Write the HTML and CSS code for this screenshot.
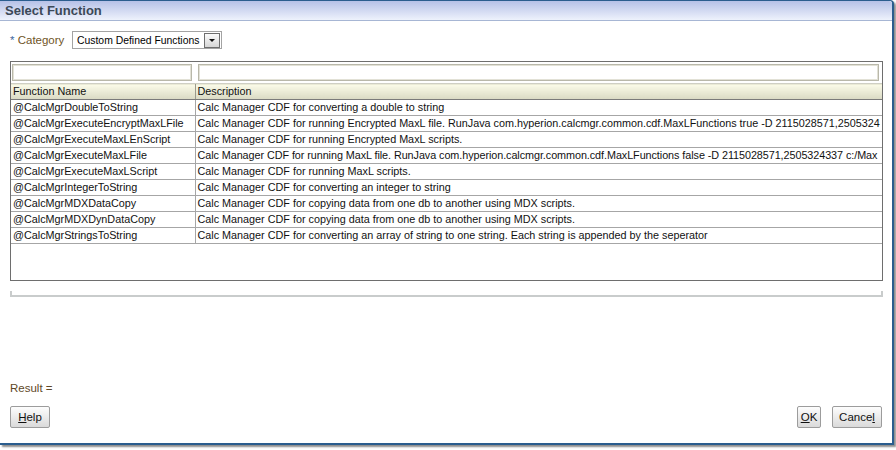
FILE: index.html
```html
<!DOCTYPE html>
<html>
<head>
<meta charset="utf-8">
<link rel="stylesheet" href="styles.css">
</head>
<body>
<div class="dialog">
  <div class="titlebar">Select Function</div>
  <div class="content">
    <div class="category">
      <span class="label"><span class="req">*</span> Category</span>
      <div class="select">
        <span class="select-text">Custom Defined Functions</span>
        <span class="select-btn"><span class="arrow"></span></span>
      </div>
    </div>
    <div class="grid">
      <table>
        <colgroup><col class="c1"><col class="c2"></colgroup>
        <tr class="filter">
          <td><div class="finput"></div></td>
          <td><div class="finput"></div></td>
        </tr>
        <tr class="head">
          <th>Function Name</th>
          <th>Description</th>
        </tr>
        <tr><td>@CalcMgrDoubleToString</td><td>Calc Manager CDF for converting a double to string</td></tr>
        <tr><td>@CalcMgrExecuteEncryptMaxLFile</td><td>Calc Manager CDF for running Encrypted MaxL file. RunJava com.hyperion.calcmgr.common.cdf.MaxLFunctions true -D 2115028571,2505324</td></tr>
        <tr><td>@CalcMgrExecuteMaxLEnScript</td><td>Calc Manager CDF for running Encrypted MaxL scripts.</td></tr>
        <tr><td>@CalcMgrExecuteMaxLFile</td><td class="tight">Calc Manager CDF for running MaxL file. RunJava com.hyperion.calcmgr.common.cdf.MaxLFunctions false -D 2115028571,2505324337 c:/Max</td></tr>
        <tr><td>@CalcMgrExecuteMaxLScript</td><td>Calc Manager CDF for running MaxL scripts.</td></tr>
        <tr><td>@CalcMgrIntegerToString</td><td>Calc Manager CDF for converting an integer to string</td></tr>
        <tr><td>@CalcMgrMDXDataCopy</td><td>Calc Manager CDF for copying data from one db to another using MDX scripts.</td></tr>
        <tr><td>@CalcMgrMDXDynDataCopy</td><td>Calc Manager CDF for copying data from one db to another using MDX scripts.</td></tr>
        <tr><td>@CalcMgrStringsToString</td><td>Calc Manager CDF for converting an array of string to one string. Each string is appended by the seperator</td></tr>
      </table>
    </div>
    <div class="hscroll"></div>
    <div class="spacer"></div>
    <div class="result">Result =</div>
    <div class="buttons">
      <button class="btn help"><u>H</u>elp</button>
      <div class="right">
        <button class="btn ok"><u>O</u>K</button>
        <button class="btn cancel">Cance<u>l</u></button>
      </div>
    </div>
  </div>
</div>
</body>
</html>
```
FILE: styles.css
```css
html, body {
  margin: 0;
  padding: 0;
  background: #ffffff;
}
body {
  font-family: "Liberation Sans", Arial, sans-serif;
  font-size: 11px;
  color: #000;
  width: 896px;
  height: 450px;
  overflow: hidden;
}
.dialog {
  width: 892px;
  height: 442px;
  border-top: 1px solid #2b5d8e;
  border-right: 2px solid #2b5d8e;
  border-bottom: 2px solid #2b5d8e;
  border-top-right-radius: 4px;
  box-shadow: 2px 2px 2px #8c8c8c;
  display: flex;
  flex-direction: column;
  background: #fff;
}
.titlebar {
  height: 19px;
  line-height: 19px;
  border-bottom: 1px solid #a7b6d4;
  background: linear-gradient(#b6c1e7, #eef2fc);
  padding-left: 5px;
  font-weight: bold;
  font-size: 13px;
  color: #3b4857;
  border-top-right-radius: 3px;
}
.content {
  flex: 1;
  display: flex;
  flex-direction: column;
  padding: 10px 9px 15px 10px;
}
.category {
  display: flex;
  align-items: center;
  height: 18px;
}
.label {
  color: #6f5426;
  font-size: 11.5px;
  width: 62px;
}
.req {
  color: #3f6aa0;
}
.select {
  width: 143px;
  height: 16px;
  border: 1px solid #a3a3a3;
  display: flex;
  align-items: center;
  justify-content: space-between;
  padding-left: 4px;
  padding-right: 1px;
  box-sizing: content-box;
  white-space: nowrap;
}
.select-text {
  font-size: 10.4px;
  white-space: nowrap;
}
.select-btn {
  width: 14px;
  height: 13px;
  border: 1px solid #6e6e6e;
  background: linear-gradient(#fbfbfb, #d6d6d6);
  display: flex;
  align-items: center;
  justify-content: center;
  flex-shrink: 0;
}
.arrow {
  width: 0;
  height: 0;
  border-left: 3px solid transparent;
  border-right: 3px solid transparent;
  border-top: 3px solid #111;
}
.grid {
  margin-top: 12px;
  width: 871px;
  height: 218px;
  border: 1px solid #6e6e6e;
  overflow: hidden;
}
table {
  width: 871px;
  table-layout: fixed;
  border-collapse: collapse;
}
col.c1 { width: 184px; }
td, th {
  padding: 0 0 0 2px;
  white-space: nowrap;
  overflow: hidden;
  height: 15px;
  line-height: 15px;
  text-align: left;
  font-weight: normal;
  font-size: 10.8px;
  border-bottom: 1px solid #a6a6a6;
  border-right: 1px solid #a6a6a6;
  color: #111;
}
td.tight {
  letter-spacing: -0.06px;
}
td:last-child, th:last-child {
  border-right: none;
}
tr.filter td {
  height: 21px;
  padding: 0;
  border-right: none;
  border-bottom: 1px solid #cfcfc4;
}
.finput {
  height: 15px;
  margin: 1px 3px 2px 1px;
  border: 1px solid #b9b8aa;
  box-shadow: inset 0 0 0 1px #e2e1d6;
}
tr.filter td:last-child .finput {
  margin-left: 3px;
}
tr.head th {
  background: linear-gradient(#fbfbe9, #d9d9c3);
  border-bottom: 1px solid #7a7a7a;
  border-right: 1px solid #9a9a8c;
}
tr.head th:last-child {
  border-right: none;
}
.hscroll {
  margin-top: 10px;
  width: 869px;
  height: 4px;
  border: 2px solid #c9cccc;
  border-top: none;
}
.spacer {
  flex: 1;
}
.result {
  color: #5f4827;
  font-size: 11.5px;
  height: 14px;
  line-height: 14px;
  margin-bottom: 11px;
}
.buttons {
  display: flex;
  justify-content: space-between;
  align-items: center;
  height: 22px;
}
.right {
  display: flex;
  gap: 11px;
  margin-right: 1px;
}
.btn {
  font-family: "Liberation Sans", Arial, sans-serif;
  font-size: 11.5px;
  height: 22px;
  padding: 0 6px;
  border: 1px solid #9c9c9c;
  border-radius: 2px;
  background: linear-gradient(#fdfdfd, #dadada);
  color: #111;
  line-height: 20px;
}
.help { width: 40px; }
.ok { width: 24px; padding: 0; }
.cancel { width: 50px; padding: 0; }
```
